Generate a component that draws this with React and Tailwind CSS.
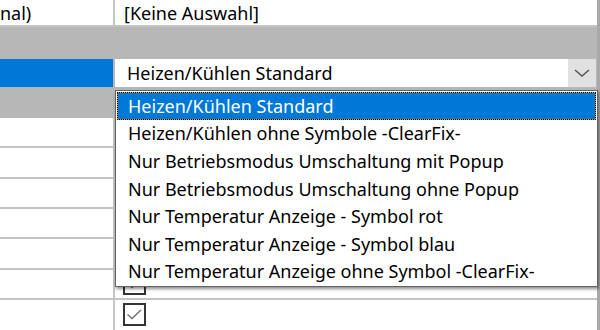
const ITEMS = [
  'Heizen/Kühlen Standard',
  'Heizen/Kühlen ohne Symbole -ClearFix-',
  'Nur Betriebsmodus Umschaltung mit Popup',
  'Nur Betriebsmodus Umschaltung ohne Popup',
  'Nur Temperatur Anzeige - Symbol rot',
  'Nur Temperatur Anzeige - Symbol blau',
  'Nur Temperatur Anzeige ohne Symbol -ClearFix-',
];

function Check() {
  return (
    <div className="w-[23px] h-[23px] border-2 border-[#333] bg-white flex items-center justify-center">
      <svg width="19" height="19" viewBox="0 0 19 19">
        <path d="M2.5 9.5 L7 13.5 L16 5" fill="none" stroke="#707070" strokeWidth="1.4" />
      </svg>
    </div>
  );
}

function Row({ left, right, last }) {
  return (
    <div className={`flex h-[31px] ${last ? '' : 'border-b-2 border-[#c4c4c4]'}`}>
      <div className="w-[113px] bg-white">{left}</div>
      <div className="w-[2px] bg-[#c4c4c4]" />
      <div className="flex-1 bg-white flex items-center pl-[8px]">{right}</div>
    </div>
  );
}

function Category() {
  return <div className="h-[31px] bg-[#b7b7b7]" />;
}

export default function App() {
  return (
    <div
      className="relative w-[600px] h-[330px] overflow-hidden bg-white text-black text-[18px]"
      style={{ fontFamily: '"Noto Sans", "Liberation Sans", sans-serif' }}
    >
      <div className="flex h-full">
        <div className="flex-1 flex flex-col">
          {/* top row */}
          <div className="flex h-[28px] border-b-2 border-[#c4c4c4]">
            <div className="w-[113px] bg-white flex items-center leading-none">nal)</div>
            <div className="w-[2px] bg-[#c4c4c4]" />
            <div className="flex-1 bg-white flex items-center pl-[9px] leading-none">[Keine Auswahl]</div>
          </div>

          <Category />

          {/* selected row */}
          <div className="flex h-[31px] bg-[#b7b7b7] py-[1px]">
            <div className="w-[113px] bg-[#0078d7]" />
            <div className="w-[2px]" />
            <div className="flex-1 bg-white flex items-center pl-[12px] leading-none">
              Heizen/Kühlen Standard
            </div>
            <div className="w-[28px] mr-[1px] bg-[#e1e1e1] flex items-center justify-center">
              <svg width="16" height="10" viewBox="0 0 16 10">
                <path d="M1 2 L8 8 L15 2" fill="none" stroke="#555" strokeWidth="1.5" />
              </svg>
            </div>
          </div>

          <Category />

          <Row />
          <Row />
          <Row />
          <Row />
          <Row />
          <Row right={<Check />} />
          <Row right={<Check />} last />
        </div>
        <div className="w-[3px] bg-[#a9a9a9]" />
      </div>

      {/* dropdown list */}
      <div className="absolute left-[115px] top-[90px] w-[483px] border border-[#646464] bg-white p-[1px] shadow-[1px_2px_3px_rgba(0,0,0,0.45)]">
        {ITEMS.map((t, i) =>
          i === 0 ? (
            <div key={t} className="h-[27.6px] border border-dotted border-black bg-[#e8922e]">
              <div className="h-full bg-[#0078d7] text-white flex items-center pl-[10px] leading-none">{t}</div>
            </div>
          ) : (
            <div key={t} className="h-[27.6px] flex items-center pl-[11px] leading-none">{t}</div>
          )
        )}
      </div>
    </div>
  );
}
